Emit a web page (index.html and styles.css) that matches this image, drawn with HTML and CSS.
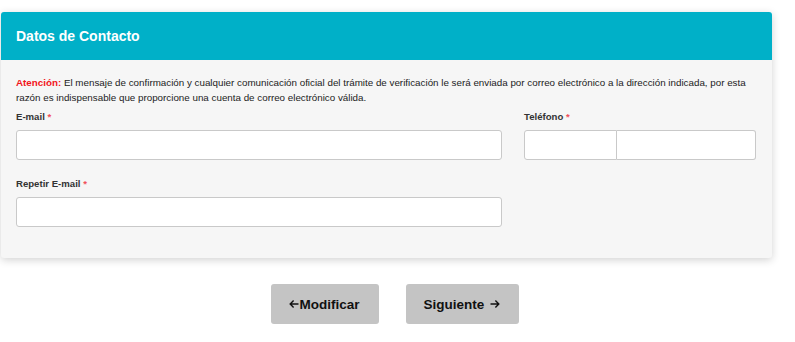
FILE: index.html
```html
<!DOCTYPE html>
<html lang="es">
<head>
<meta charset="utf-8">
<title>Datos de Contacto</title>
<link rel="stylesheet" href="styles.css">
</head>
<body>
<div class="page">
  <section class="card">
    <header class="card-header">Datos de Contacto</header>
    <div class="card-body">
      <p class="notice"><strong class="notice-label">Atención:</strong> El mensaje de confirmación y cualquier comunicación oficial del trámite de verificación le será enviada por correo electrónico a la dirección indicada, por esta razón es indispensable que proporcione una cuenta de correo electrónico válida.</p>
      <div class="form-grid">
        <div class="field">
          <label class="label">E-mail <span class="req">*</span></label>
          <input class="input" type="text">
        </div>
        <div class="field">
          <label class="label">Teléfono <span class="req">*</span></label>
          <div class="phone">
            <input class="phone-part phone-code" type="text">
            <input class="phone-part phone-num" type="text">
          </div>
        </div>
        <div class="field">
          <label class="label">Repetir E-mail <span class="req">*</span></label>
          <input class="input" type="text">
        </div>
      </div>
    </div>
  </section>
  <div class="actions">
    <button class="btn btn-back" type="button"><svg class="arrow" viewBox="0 0 10 10" width="10" height="10"><path d="M9.5 5H1.2M4.6 1.6L1.2 5L4.6 8.4" fill="none" stroke="#111" stroke-width="1.4"/></svg>Modificar</button>
    <button class="btn btn-next" type="button">Siguiente<svg class="arrow" viewBox="0 0 10 10" width="10" height="10"><path d="M0.5 5H8.8M5.4 1.6L8.8 5L5.4 8.4" fill="none" stroke="#111" stroke-width="1.4"/></svg></button>
  </div>
</div>
</body>
</html>
```
FILE: styles.css
```css
* { box-sizing: border-box; }
html, body { margin: 0; padding: 0; background: #ffffff; }
body {
  font-family: "Liberation Sans", Arial, sans-serif;
  color: #222;
}
.page {
  padding: 12px 23px 0 1px;
}
.card {
  background: #f6f6f6;
  border-radius: 3px;
  box-shadow: 0 2px 8px rgba(0,0,0,0.18);
}
.card-header {
  background: #00b0c8;
  color: #fff;
  font-weight: bold;
  font-size: 14px;
  height: 48px;
  line-height: 48px;
  padding-left: 15px;
  border-radius: 3px 3px 0 0;
}
.card-body {
  padding: 15px 16px 31px 15px;
}
.notice {
  margin: 0;
  font-size: 9.8px;
  line-height: 15px;
  color: #222;
}
.notice-label { color: #f2141a; font-weight: bold; }
.form-grid {
  display: grid;
  grid-template-columns: 486px 232px;
  column-gap: 22px;
  row-gap: 18px;
  margin-top: 6px;
}
.field { display: flex; flex-direction: column; }
.label {
  font-size: 9.6px;
  font-weight: bold;
  color: #333;
  line-height: 12px;
  margin-bottom: 7px;
}
.req { color: #f0505a; }
.input, .phone-part {
  height: 30px;
  border: 1px solid #c9c9c9;
  background: #fff;
  border-radius: 3px;
  font: inherit;
  padding: 0 8px;
  outline: none;
}
.phone { display: flex; }
.phone-part { min-width: 0; }
.phone-code {
  width: 93px;
  border-radius: 3px 0 0 3px;
}
.phone-num {
  flex: 1;
  border-left: none;
  border-radius: 0 3px 3px 0;
}
.actions {
  display: flex;
  justify-content: center;
  gap: 27px;
  margin-top: 26px;
  padding-left: 16px;
}
.btn {
  display: flex;
  align-items: center;
  background: #c4c4c4;
  border: none;
  border-radius: 3px;
  height: 40px;
  font-family: "Liberation Sans", Arial, sans-serif;
  font-weight: bold;
  font-size: 13.5px;
  color: #111;
}
.btn-back { width: 108px; padding: 0 0 0 18px; }
.btn-next { width: 113px; padding: 0 0 0 18px; }
.btn-back .arrow { margin-right: 1px; }
.btn-next .arrow { margin-left: 6px; }
```
